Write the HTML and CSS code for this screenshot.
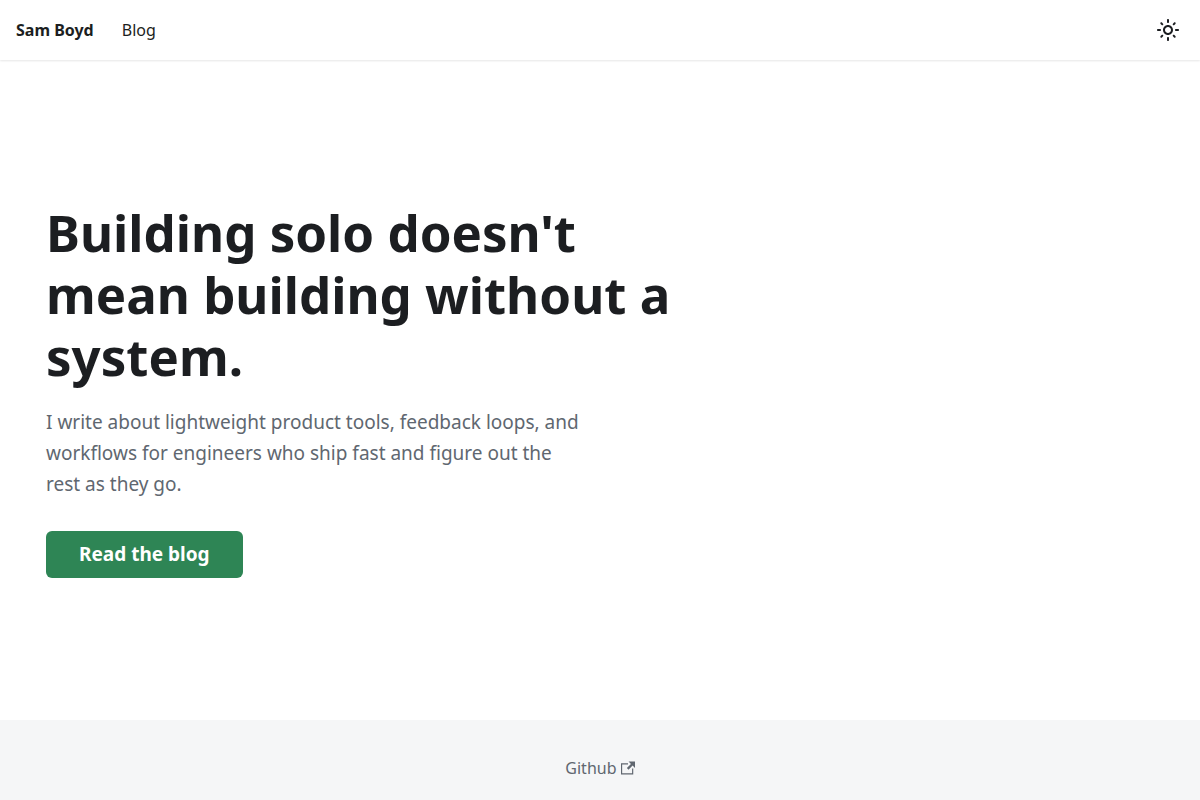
FILE: index.html
```html
<!DOCTYPE html>
<html lang="en">
<head>
    <meta charset="UTF-8">
    <meta name="viewport" content="width=device-width, initial-scale=1.0">
    <title>Sam Boyd</title>
    <link rel="stylesheet" href="styles.css">
</head>
<body>
    <nav class="navbar">
        <a class="navbar-brand" href="/">Sam Boyd</a>
        <a class="navbar-link" href="/blog">Blog</a>
        <button class="theme-toggle" type="button" aria-label="Switch between dark and light mode">
            <svg viewBox="0 0 24 24" width="24" height="24" aria-hidden="true">
                <path fill="currentColor" d="M12,9c1.65,0,3,1.35,3,3s-1.35,3-3,3s-3-1.35-3-3S10.35,9,12,9 M12,7c-2.76,0-5,2.24-5,5s2.24,5,5,5s5-2.24,5-5 S14.76,7,12,7L12,7z M2,13l2,0c0.55,0,1-0.45,1-1s-0.45-1-1-1l-2,0c-0.55,0-1,0.45-1,1S1.45,13,2,13z M20,13l2,0c0.55,0,1-0.45,1-1 s-0.45-1-1-1l-2,0c-0.55,0-1,0.45-1,1S19.45,13,20,13z M11,2v2c0,0.55,0.45,1,1,1s1-0.45,1-1V2c0-0.55-0.45-1-1-1S11,1.45,11,2z M11,20v2c0,0.55,0.45,1,1,1s1-0.45,1-1v-2c0-0.55-0.45-1-1-1C11.45,19,11,19.45,11,20z M5.99,4.58c-0.39-0.39-1.03-0.39-1.41,0 c-0.39,0.39-0.39,1.03,0,1.41l1.06,1.06c0.39,0.39,1.03,0.39,1.41,0s0.39-1.03,0-1.41L5.99,4.58z M18.36,16.95 c-0.39-0.39-1.03-0.39-1.41,0c-0.39,0.39-0.39,1.03,0,1.41l1.06,1.06c0.39,0.39,1.03,0.39,1.41,0c0.39-0.39,0.39-1.03,0-1.41 L18.36,16.95z M19.42,5.99c0.39-0.39,0.39-1.03,0-1.41c-0.39-0.39-1.03-0.39-1.41,0l-1.06,1.06c-0.39,0.39-0.39,1.03,0,1.41 s1.03,0.39,1.41,0L19.42,5.99z M7.05,18.36c0.39-0.39,0.39-1.03,0-1.41c-0.39-0.39-1.03-0.39-1.41,0l-1.06,1.06 c-0.39,0.39-0.39,1.03,0,1.41s1.03,0.39,1.41,0L7.05,18.36z"/>
            </svg>
        </button>
    </nav>

    <main class="hero">
        <h1 class="hero-title">Building solo doesn't mean building without a system.</h1>
        <p class="hero-text">I write about lightweight product tools, feedback loops, and workflows for engineers who ship fast and figure out the rest as they go.</p>
        <a class="hero-button" href="/blog">Read the blog</a>
    </main>

    <footer class="footer">
        <a class="footer-link" href="https://github.com">Github
            <svg viewBox="0 0 24 24" width="14" height="14" aria-hidden="true">
                <path fill="currentColor" d="M21 13v10h-21v-19h12v2h-10v15h17v-8h2zm3-12h-10.988l4.035 4-6.977 7.07 2.828 2.828 6.977-7.07 4.125 4.172v-11z"/>
            </svg>
        </a>
    </footer>
</body>
</html>
```
FILE: styles.css
```css
* {
    box-sizing: border-box;
}
body {
    display: flex;
    flex-direction: column;
    min-height: 100vh;
    margin: 0;
    font-family: "Noto Sans", sans-serif;
    font-size: 16px;
    line-height: 26px;
    color: #1c1e21;
    background: #fff;
}
a {
    color: inherit;
    text-decoration: none;
}
.navbar {
    display: flex;
    align-items: center;
    height: 60px;
    padding: 8px 16px;
    box-shadow: 0 1px 2px 0 rgba(0, 0, 0, 0.1);
}
.navbar-brand {
    margin-right: 16px;
    font-weight: bold;
}
.navbar-link {
    padding: 4px 12px;
}
.theme-toggle {
    display: flex;
    align-items: center;
    justify-content: center;
    width: 32px;
    height: 32px;
    margin-left: auto;
    padding: 0;
    border: none;
    border-radius: 50%;
    background: none;
    color: inherit;
    cursor: pointer;
}
.theme-toggle:hover {
    background: #ebedf0;
}
.hero {
    display: flex;
    flex: 1;
    flex-direction: column;
    align-items: flex-start;
    justify-content: center;
    padding: 64px 46px 66px;
}
.hero-title {
    max-width: 680px;
    margin: 0 0 20px;
    font-size: 51px;
    line-height: 62px;
}
.hero-text {
    max-width: 540px;
    margin: 0 0 31px;
    font-size: 19px;
    line-height: 31px;
    color: #606770;
}
.hero-button {
    padding: 10px 33px;
    border-radius: 6px;
    background: #2e8555;
    color: #fff;
    font-size: 19px;
    font-weight: bold;
    line-height: 27px;
}
.hero-button:hover {
    background: #29784c;
}
.footer {
    height: 80px;
    padding: 35px 32px 0;
    background: #f5f6f7;
    text-align: center;
    color: #606770;
}
.footer-link svg {
    vertical-align: -1px;
}
```
